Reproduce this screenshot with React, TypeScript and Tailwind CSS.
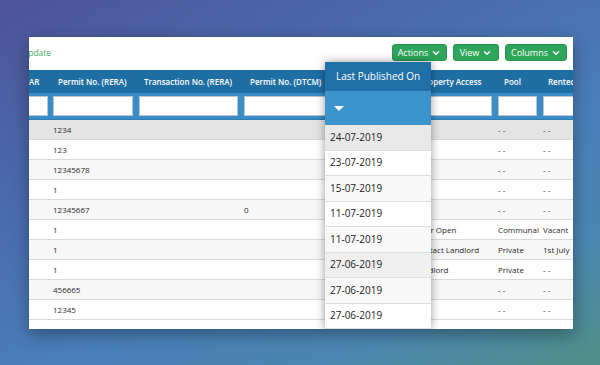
import { ChevronDown } from 'lucide-react';

type Col = { label: string; cell: string; head: string; input: string };

// column widths mirror the scrolled table in the shot
const cols: Col[] = [
  { label: 'AR', cell: 'w-[21px] shrink-0', head: 'pl-0', input: 'border-y border-r -ml-[1px] mr-[2px]' },
  { label: 'Permit No. (RERA)', cell: 'w-[86px] shrink-0', head: 'pl-[8px]', input: 'border mx-[3px]' },
  { label: 'Transaction No. (RERA)', cell: 'w-[105px] shrink-0', head: 'pl-[8px]', input: 'border mx-[3px]' },
  { label: 'Permit No. (DTCM)', cell: 'w-[100px] shrink-0', head: 'pl-[9px]', input: 'border mx-[3px]' },
  { label: 'Published', cell: 'w-[71px] shrink-0', head: 'pl-[8px]', input: 'border mx-[3px]' },
  { label: 'Property Access', cell: 'w-[83px] shrink-0', head: 'pl-[8px]', input: 'border mx-[3px]' },
  { label: 'Pool', cell: 'w-[45px] shrink-0', head: 'pl-[9px]', input: 'border mx-[3px]' },
  { label: 'Rented', cell: 'w-[60px] shrink-0', head: 'pl-[8px]', input: 'border mx-[3px]' },
];

const rows: string[][] = [
  ['', '1234', '', '', '', '', '- -', '- -'],
  ['', '123', '', '', '', '', '- -', '- -'],
  ['', '12345678', '', '', '', '', '- -', '- -'],
  ['', '1', '', '', '', '', '- -', '- -'],
  ['', '12345667', '', '0', '', '', '- -', '- -'],
  ['', '1', '', '', '', 'Door Open', 'Communal', 'Vacant'],
  ['', '1', '', '', '', 'Contact Landlord', 'Private', '1st July'],
  ['', '1', '', '', '', 'Landlord', 'Private', '- -'],
  ['', '456665', '', '', '', '', '- -', '- -'],
  ['', '12345', '', '', '', '', '- -', '- -'],
];

const rowBg = ['bg-[#e4e4e4]', 'bg-white', 'bg-[#f7f7f7]', 'bg-white', 'bg-[#f7f7f7]', 'bg-white', 'bg-[#f7f7f7]', 'bg-white', 'bg-[#f7f7f7]', 'bg-white'];

const dates = ['24-07-2019', '23-07-2019', '15-07-2019', '11-07-2019', '11-07-2019', '27-06-2019', '27-06-2019', '27-06-2019'];
const dateBg = ['bg-[#e8e8e8]', 'bg-white', 'bg-[#f8f8f8]', 'bg-white', 'bg-[#f8f8f8]', 'bg-[#efefef]', 'bg-[#f8f8f8]', 'bg-white'];

function Btn({ label, w }: { label: string; w: string }) {
  return (
    <div className={`${w} h-[17px] rounded-[3px] bg-[#2ea55a] border border-[#27954f] text-white text-[9px] flex items-center justify-center gap-[3px]`}>
      <span>{label}</span>
      <ChevronDown size={10} strokeWidth={3.5} />
    </div>
  );
}

export default function App() {
  return (
    <div
      className="w-[600px] h-[365px] overflow-hidden bg-[linear-gradient(155deg,#4d5598_0%,#4a6cae_35%,#4a7fb9_60%,#4a86b0_80%,#4f8f86_100%)] pt-[37px] pl-[29px]"
      style={{ fontFamily: '"Open Sans", "Liberation Sans", sans-serif' }}
    >
      <div className="relative w-[544px] h-[292px] bg-white overflow-hidden shadow-[0_5px_16px_rgba(0,0,0,0.35)]">
        <div className="h-[33px] flex items-center justify-between pr-[6px]">
          <span className="-ml-[7px] text-[8.5px] text-[#3fae5f]">Update</span>
          <div className="flex gap-[6px] -mt-[2px]">
            <Btn label="Actions" w="w-[55px]" />
            <Btn label="View" w="w-[46px]" />
            <Btn label="Columns" w="w-[62px]" />
          </div>
        </div>

        <div className="flex h-[23px] bg-[#1e6ea4] text-white text-[8px] font-semibold whitespace-nowrap">
          {cols.map((c) => (
            <div key={c.label} className={`${c.cell} ${c.head} flex items-center overflow-hidden`}>
              {c.label}
            </div>
          ))}
        </div>
        <div className="flex h-[27px] bg-[#3b8dc7] items-center border-b border-[#2f7db3]">
          {cols.map((c) => (
            <div key={c.label} className={`${c.cell} flex`}>
              <div className={`${c.input} flex-1 h-[20px] bg-white border-[#b9c4cc]`} />
            </div>
          ))}
        </div>

        {rows.map((r, i) => (
          <div key={i} className={`flex h-[20px] border-b border-[#dadada] ${rowBg[i]} text-[8px] text-[#2a2a2a] whitespace-nowrap`}>
            {r.map((v, j) => (
              <div key={j} className={`${cols[j].cell} px-[3px] flex items-center overflow-hidden`}>
                {v}
              </div>
            ))}
          </div>
        ))}
        <div className="h-[20px] bg-white" />

        <div className="absolute left-[296px] top-[25px] bottom-0 w-[106px] flex flex-col shadow-[0_0_9px_rgba(0,0,0,0.4)]">
          <div className="h-[29px] bg-[#1f6fa8] text-white text-[10px] font-medium pl-[11px] flex items-center">Last Published On</div>
          <div className="h-[34px] bg-[#3d94cc] pl-[9px] flex items-center">
            <div className="w-0 h-0 border-l-[5px] border-r-[5px] border-t-[5px] border-l-transparent border-r-transparent border-t-white" />
          </div>
          {dates.map((d, i) => (
            <div key={i} className={`h-[25.5px] shrink-0 border-b border-[#dedede] ${dateBg[i]} pl-[5px] flex items-center text-[10px] text-[#222]`}>
              {d}
            </div>
          ))}
        </div>
      </div>
    </div>
  );
}
